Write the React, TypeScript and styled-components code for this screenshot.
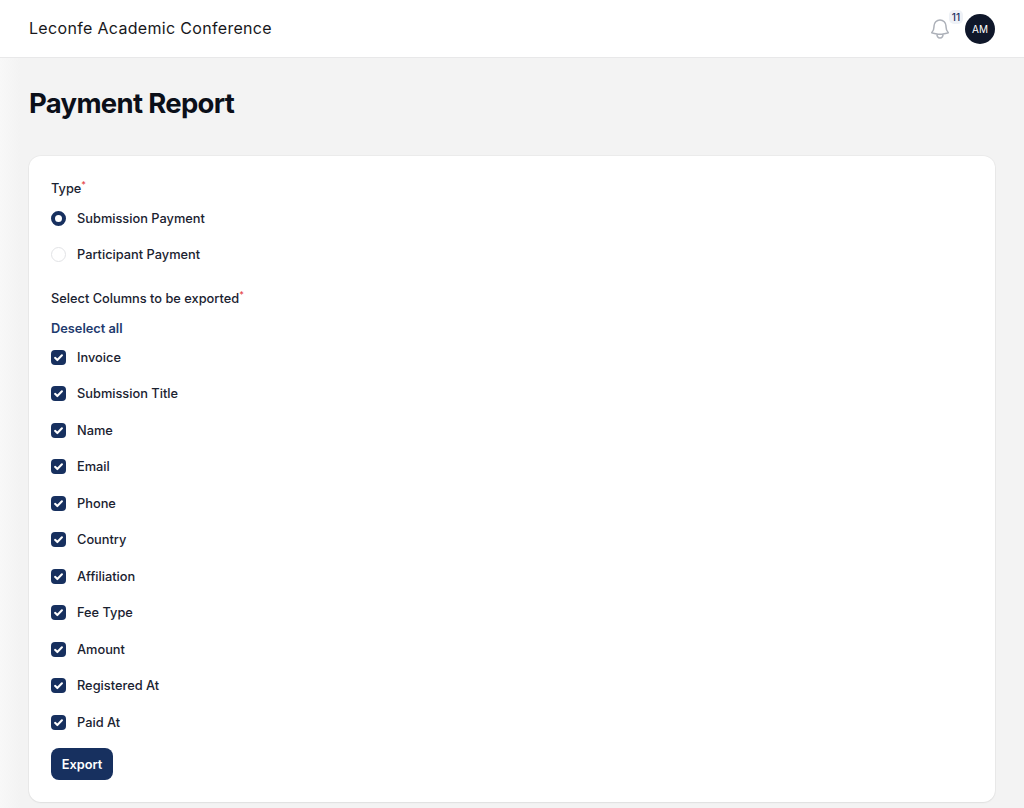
import styled, { createGlobalStyle } from 'styled-components';

const columns = [
    'Invoice',
    'Submission Title',
    'Name',
    'Email',
    'Phone',
    'Country',
    'Affiliation',
    'Fee Type',
    'Amount',
    'Registered At',
    'Paid At',
];

const App = () => {
    return (
        <Page>
            <GlobalStyle />
            <TopBar>
                <Brand>Leconfe Academic Conference</Brand>
                <TopActions>
                    <BellButton>
                        <svg width="24" height="24" viewBox="0 0 24 24" fill="none" stroke="#adb1b9" strokeWidth="1.5" strokeLinecap="round" strokeLinejoin="round">
                            <path d="M14.857 17.082a23.848 23.848 0 0 0 5.454-1.31A8.967 8.967 0 0 1 18 9.75V9A6 6 0 0 0 6 9v.75a8.967 8.967 0 0 1-2.312 6.022c1.733.64 3.56 1.085 5.455 1.31m5.714 0a24.255 24.255 0 0 1-5.714 0m5.714 0a3 3 0 1 1-5.714 0" />
                        </svg>
                        <Badge>11</Badge>
                    </BellButton>
                    <Avatar>AM</Avatar>
                </TopActions>
            </TopBar>
            <Main>
                <Heading>Payment Report</Heading>
                <Card>
                    <FieldLabel>
                        Type<Required>*</Required>
                    </FieldLabel>
                    <RadioGroup>
                        <OptionRow>
                            <Radio checked />
                            Submission Payment
                        </OptionRow>
                        <OptionRow>
                            <Radio />
                            Participant Payment
                        </OptionRow>
                    </RadioGroup>
                    <ColumnsLabel>
                        Select Columns to be exported<Required>*</Required>
                    </ColumnsLabel>
                    <DeselectLink>Deselect all</DeselectLink>
                    <CheckList>
                        {columns.map((column) => (
                            <OptionRow key={column}>
                                <CheckBox>
                                    <svg width="11" height="11" viewBox="0 0 16 16" fill="none" stroke="#fff" strokeWidth="3" strokeLinecap="round" strokeLinejoin="round">
                                        <path d="M3 8.5l3.3 3.2L13 4.8" />
                                    </svg>
                                </CheckBox>
                                {column}
                            </OptionRow>
                        ))}
                    </CheckList>
                    <ExportButton>Export</ExportButton>
                </Card>
            </Main>
        </Page>
    );
};

const GlobalStyle = createGlobalStyle`
    html, body {
        margin: 0;
        height: 808px;
        overflow: hidden;
    }
    body {
        font-family: Inter, "Liberation Sans", sans-serif;
        background: #f3f3f3;
    }
`;

const Page = styled.div`
    display: flex;
    flex-direction: column;
    height: 808px;
    color: #111827;
`;

const TopBar = styled.header`
    height: 58px;
    box-sizing: border-box;
    flex: none;
    display: flex;
    align-items: center;
    justify-content: space-between;
    padding: 0 29px;
    background: #fff;
    border-bottom: 1px solid #e8e8e9;
`;

const Brand = styled.div`
    font-size: 16px;
    font-weight: 400;
    letter-spacing: 0.02em;
    color: #18181b;
    margin-top: -2px;
`;

const TopActions = styled.div`
    display: flex;
    align-items: center;
    gap: 13px;
`;

const BellButton = styled.div`
    position: relative;
    display: flex;
    width: 24px;
    height: 24px;
`;

const Badge = styled.span`
    position: absolute;
    top: -7px;
    left: 21px;
    width: 14px;
    height: 14px;
    border-radius: 5px;
    background: #eef1f6;
    color: #1a2f5f;
    font-size: 10px;
    font-weight: 500;
    line-height: 14px;
    text-align: center;
`;

const Avatar = styled.div`
    width: 30px;
    height: 30px;
    border-radius: 50%;
    background: #0f172a;
    color: #fff;
    font-size: 10px;
    font-weight: 400;
    display: flex;
    align-items: center;
    justify-content: center;
`;

const Main = styled.main`
    flex: 1;
    padding: 0 29px;
    background: linear-gradient(to right, #f8f8f8 0, #f3f3f3 20px);
`;

const Heading = styled.h1`
    margin: 27px 0 35px;
    font-size: 27.5px;
    line-height: 36px;
    font-weight: 700;
    letter-spacing: -0.025em;
    color: #0b0f19;
`;

const Card = styled.section`
    background: #fff;
    border-radius: 12px;
    box-shadow: 0 0 0 1px rgba(0, 0, 0, 0.03), 0 1px 2px rgba(0, 0, 0, 0.05);
    padding: 24px 22px 22px;
    display: flex;
    flex-direction: column;
    align-items: flex-start;
    height: 646px;
    box-sizing: border-box;
`;

const FieldLabel = styled.div`
    font-size: 12.8px;
    line-height: 18px;
    font-weight: 500;
    color: #1a2230;
`;

const ColumnsLabel = styled(FieldLabel)`
    margin-top: 26px;
`;

const Required = styled.sup`
    color: #e5484d;
    font-size: 9px;
    line-height: 0;
    font-weight: 500;
`;

const RadioGroup = styled.div`
    display: flex;
    flex-direction: column;
    gap: 18.5px;
    margin-top: 11px;
`;

const OptionRow = styled.label`
    display: flex;
    align-items: center;
    gap: 11px;
    height: 18px;
    font-size: 12.8px;
    font-weight: 500;
    color: #1a2230;
`;

const Radio = styled.span<{ checked?: boolean }>`
    width: 15px;
    height: 15px;
    box-sizing: border-box;
    border-radius: 50%;
    flex: none;
    background: #fff;
    border: ${(props) => (props.checked ? '4.5px solid #17305f' : '1px solid #e2e3e6')};
`;

const DeselectLink = styled.a`
    margin-top: 12px;
    font-size: 12.8px;
    line-height: 18px;
    font-weight: 600;
    color: #1e3a6e;
`;

const CheckList = styled.div`
    display: flex;
    flex-direction: column;
    gap: 18.5px;
    margin-top: 10.6px;
`;

const CheckBox = styled.span`
    width: 15px;
    height: 15px;
    border-radius: 4px;
    background: #17305f;
    flex: none;
    display: flex;
    align-items: center;
    justify-content: center;
`;

const ExportButton = styled.button`
    margin-top: 17px;
    width: 62px;
    height: 33px;
    border: 0;
    border-radius: 8px;
    background: #17305f;
    color: #fff;
    font-family: inherit;
    font-size: 12.8px;
    font-weight: 600;
    padding: 0;
`;

export default App;
